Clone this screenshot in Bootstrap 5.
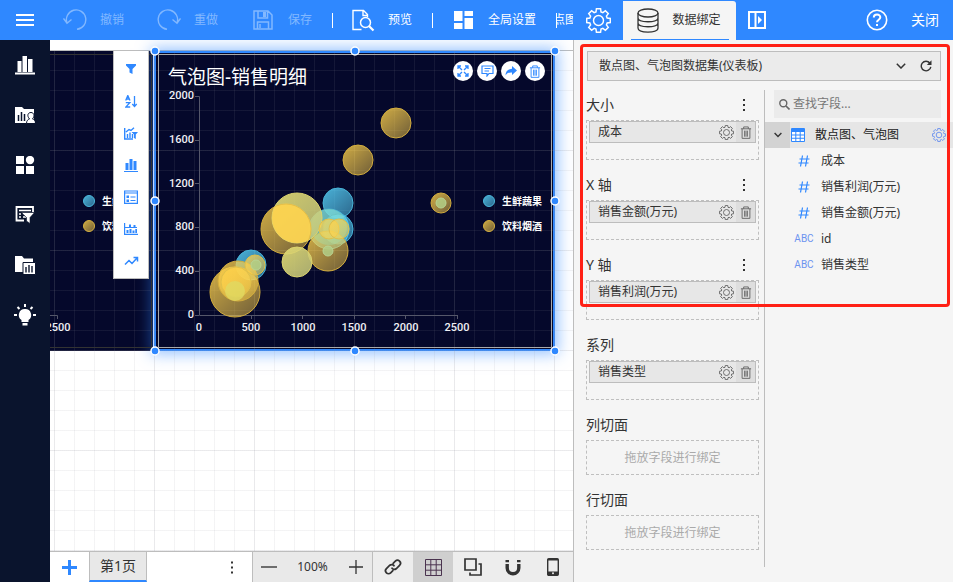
<!DOCTYPE html>
<html lang="zh-CN">
<head>
<meta charset="utf-8">
<meta name="viewport" content="width=device-width, initial-scale=1">
<title>仪表板设计器</title>
<link href="https://cdn.jsdelivr.net/npm/bootstrap@5.3.0/dist/css/bootstrap.min.css" rel="stylesheet">
<style>
:root { --brand:#2f88ff; --navy:#05082b; --line:#bdbdbd; --panel:#f5f5f5; }
body { font-family:"Noto Sans","Noto Sans CJK SC",sans-serif; font-size:12px; line-height:20px; color:#333; }
button { background:none; border:0; padding:0; color:inherit; font-size:inherit; line-height:inherit; }
svg { display:block; flex:none; }
.ln { fill:none; stroke:currentColor; }
.topbar { background:var(--brand); height:40px; color:#fff; }
.icon-slot { width:24px; display:flex; justify-content:center; }
.tool { display:flex; align-items:center; gap:13px; white-space:nowrap; flex:none; }
.tool:disabled { color:#82b8ff; }
.tools { gap:33px; }
.menu-btn { width:50px; margin-right:13px; }
.sep { width:1px; height:15px; background:#fff; margin:0 18px 0 20px; flex:none; }
.peek { width:17px; border-left:1px solid #fff; height:15px; overflow:hidden; margin-left:20px; white-space:nowrap; display:flex; justify-content:center; align-items:center; flex:none; }
.side { width:379px; flex:none; }
.tab-cog { width:49px; }
.tab-bind { background:var(--panel); color:#333; width:113px; margin-top:1px; border-radius:0 3px 0 0; }
.tab-bind .tool { width:98px; margin:0 auto; height:100%; border-bottom:1px solid var(--brand); padding-left:6px; gap:14px; }
.side .big { font-size:14px; margin:0 14px 0 23px; }
.rail { width:50px; background:#0a142d; color:#fff; flex:none; }
.rail button { height:50px; }
.board { background:#fff; overflow:hidden; min-width:0; }
.stage { margin-top:10px; border-top:1px solid var(--line); position:relative; }
.gridlines { position:absolute; inset:0; pointer-events:none;
 background-image:linear-gradient(90deg,rgba(150,150,160,.1) 1px,transparent 1px),linear-gradient(rgba(150,150,160,.1) 1px,transparent 1px),linear-gradient(90deg,rgba(150,150,160,.11) 1px,transparent 1px),linear-gradient(rgba(150,150,160,.11) 1px,transparent 1px);
 background-size:100px 100px,100px 100px,20px 20px,20px 20px; background-position:4px -1px; }
.widget { position:absolute; top:0; height:300px; background:var(--navy); color:#fff; }
.widget-a { left:0; width:103px; }
.widget-b { left:104px; width:401px; border:2px solid var(--brand); box-shadow:0 0 14px 3px rgba(47,136,255,.5); }
.plot { position:absolute; top:0; height:300px; }
.plot-a { left:0; width:104px; }
.plot-b { left:104px; width:401px; }
.plot text { font:500 11px Roboto,"Noto Sans CJK SC",sans-serif; fill:#f0f0f5; }
.plot .key { font-size:10px; font-weight:700; fill:#fff; }
.widget-head { position:absolute; top:10px; left:118px; width:377px; color:#fff; }
.widget-head h2 { font-size:19px; line-height:32px; margin:0; font-weight:400; }
.round { width:20px; height:20px; border-radius:50%; background:#fff; color:var(--brand); display:flex; align-items:center; justify-content:center; }
.quick { position:absolute; left:63px; top:0; width:36px; background:#fff; color:var(--brand); border:1px solid var(--line); border-top:0; padding:2px 0 1px; }
.quick button { height:32px; display:flex; align-items:center; justify-content:center; }
.footbar { height:31px; border-top:1px solid var(--line); }
.footbar button { width:40px; display:flex; align-items:center; justify-content:center; flex:none; }
.footbar .add { width:39px; }
.page-tab { background:#e8e8e8; border:solid var(--line); border-width:0 1px; font-size:14px; }
.footbar .page-tab { width:58px; border-bottom:2px solid var(--brand); }
.footbar .more { width:41px; }
.zoomer { background:#e9e9e9; border:solid var(--line); border-width:0 1px; width:121px; }
.footbar .zoomer button { width:32px; }
.modes { background:#ededed; }
.modes .on { background:#cfcfcf; }
.panel { background:var(--panel); border-left:1px solid var(--line); position:relative; width:380px; flex:none; padding-top:11px; }
.source { margin:0 12px 9px 13px; height:30px; background:#ebebeb; border:1px solid var(--line); }
.source select { appearance:none; background:none; border:0; color:#333; height:28px; padding:0 11px; outline:0; }
.source button { width:28px; display:flex; justify-content:center; align-items:center; }
.chev { pointer-events:none; margin-right:6px; }
.bindings { width:191px; padding:0 5px 0 12px; border-right:1px solid var(--line); margin-bottom:15px; flex:none; }
.bindings section { margin-bottom:10px; }
.bindings h3 { font-size:14px; line-height:30px; margin:0; font-weight:400; }
.bindings h3 + button { width:30px; display:flex; justify-content:center; }
.drop { border:1px dashed #bfbfbf; height:40px; padding:0 2px; }
.drop-empty { height:35px; color:#aaa; display:flex; align-items:center; justify-content:center; }
.chip { height:22px; background:#e7e7e7; border:1px solid var(--line); padding-left:8px; }
.chip span { flex:1; }
.chip button { width:19px; height:20px; display:flex; align-items:center; justify-content:center; color:#666; }
.chip .del { background:#dedede; }
.search { margin:0 12px 4px 9px; height:28px; background:#ebebeb; padding-left:5px; gap:3px; color:#666; }
.search input { border:0; background:none; outline:0; width:100%; min-width:0; padding:0; }
.search input::placeholder { color:#777; }
.tree li, .root { height:26px; display:flex; align-items:center; }
.root { background:#e6e6e6; color:#222; }
.root .twist { width:25px; height:26px; background:#d3d3d3; display:flex; align-items:center; justify-content:center; margin-right:1px; }
.root .name { flex:1; padding-left:10px; }
.root .cog { margin-right:7px; color:#6f95ef; }
.kind { width:24px; margin-left:27px; margin-right:5px; display:flex; justify-content:center; color:var(--brand); font:10px/20px Roboto,sans-serif; }
.kind.abc { color:#6c93f0; }
.focus-frame { position:absolute; left:6px; right:3px; top:4px; height:263px; border:3px solid #ff2015; border-radius:4px; pointer-events:none; }
</style>
<script src="https://cdn.jsdelivr.net/npm/bootstrap@5.3.0/dist/js/bootstrap.bundle.min.js"></script>
</head>
<body class="vh-100 d-flex flex-column overflow-hidden">
<svg width="0" height="0" class="position-absolute" aria-hidden="true">
<defs>
<symbol id="cog" viewBox="-12 -12 24 24"><path class="ln" d="M-2.4-8.3L-2-11.3H2L2.4-8.3L4.2-7.6L6.6-9.4L9.4-6.6L7.6-4.2L8.3-2.4L11.3-2V2L8.3 2.4L7.6 4.2L9.4 6.6L6.6 9.4L4.2 7.6L2.4 8.3L2 11.3H-2L-2.4 8.3L-4.2 7.6L-6.6 9.4L-9.4 6.6L-7.6 4.2L-8.3 2.4L-11.3 2V-2L-8.3-2.4L-7.6-4.2L-9.4-6.6L-6.6-9.4L-4.2-7.6Z"/><circle class="ln" r="4.8"/></symbol>
<symbol id="bin" viewBox="0 0 12 14"><path class="ln" d="M.5 3H11.500M3.500 3V1H8.500V3M1.800 3V13.300H10.200V3M4.500 5V11.500M6 5V11.500M7.500 5V11.500"/></symbol>
<symbol id="dots" viewBox="0 0 4 14"><path fill="currentColor" d="M1 1h2v2H1zM1 6h2v2H1zM1 11h2v2H1z"/></symbol>
<symbol id="hash" viewBox="0 0 12 12"><path class="ln" stroke-width="1.2" d="M4.500.5L2.500 11.500M9.500.5L7.500 11.500M1.500 4H11.500M.5 8H10.500"/></symbol>
<linearGradient id="gold" x1="0" y1="0" x2="1" y2="1"><stop offset="0" stop-color="#ffd24b" stop-opacity=".82"/><stop offset="1" stop-color="#ffd24b" stop-opacity=".42"/></linearGradient>
<linearGradient id="aqua" x1="0" y1="0" x2="1" y2="1"><stop offset="0" stop-color="#5ad8ff" stop-opacity=".82"/><stop offset="1" stop-color="#5ad8ff" stop-opacity=".45"/></linearGradient>
<linearGradient id="lime" x1="0" y1="0" x2="1" y2="1"><stop offset="0" stop-color="#e4dc72" stop-opacity=".92"/><stop offset="1" stop-color="#c5c87c" stop-opacity=".85"/></linearGradient>
<clipPath id="overlap"><circle cx="297" cy="218" r="25"/></clipPath>
</defs>
</svg>

<header class="topbar d-flex flex-shrink-0">
 <div class="d-flex align-items-center flex-grow-1 overflow-hidden">
  <button class="menu-btn d-flex justify-content-center flex-shrink-0" aria-label="菜单"><svg width="18" height="12"><path d="M0 1H18M0 6H18M0 11H18" stroke="#fff" stroke-width="2"/></svg></button>
  <div class="tools d-flex">
   <button class="tool" disabled><svg width="24" height="22"><path class="ln" stroke-width="1.400" d="M4 14A9.700 9.700 0 1 1 14 20.300M.5 9.500L4 14.200L8.500 10.500"/></svg>撤销</button>
   <button class="tool" disabled><svg width="24" height="22"><path class="ln" stroke-width="1.400" d="M20 14A9.700 9.700 0 1 0 10 20.300M23.500 9.500L20 14.200L15.500 10.500"/></svg>重做</button>
   <button class="tool" disabled><span class="icon-slot"><svg width="20" height="20"><path class="ln" stroke-width="1.500" d="M1 1H15L19 5V19H1ZM5 1V8H14.500V1M4.500 19V12H15.500V19M7 14V18"/><path fill="currentColor" d="M10 2h3v5h-3z"/></svg></span>保存</button>
  </div>
  <span class="sep"></span>
  <button class="tool"><svg width="24" height="23"><path class="ln" stroke-width="1.400" d="M10.500 20.500H2V1.500H12.500L16.500 5.500V8M12 1.500V6.500H16.500"/><circle class="ln" stroke-width="1.500" cx="14.500" cy="13.500" r="5"/><path stroke="currentColor" stroke-width="2.200" d="M18 17L22.500 21.500"/></svg>预览</button>
  <span class="sep"></span>
  <button class="tool"><span class="icon-slot"><svg width="19" height="18"><path fill="#fff" d="M0 0H8.500V10H0ZM10.500 0H19V5H10.500ZM0 12H8.500V18H0ZM10.500 7H19V18H10.500Z"/></svg></span>全局设置</button>
  <span class="peek">点图</span>
 </div>
 <nav class="side d-flex">
  <button class="tab-cog d-flex align-items-center justify-content-center" aria-label="设置"><svg width="25" height="25" stroke-width="1.400"><use href="#cog"/></svg></button>
  <button class="tab-bind"><span class="tool"><svg width="22" height="25"><g fill="none" stroke="#333" stroke-width="1.300"><ellipse cx="11" cy="5" rx="10" ry="4"/><path d="M1 5V20C1 25.500 21 25.500 21 20V5M1 10C1 15 21 15 21 10M1 15C1 20 21 20 21 15"/></g></svg>数据绑定</span></button>
  <button class="ms-2 px-1" aria-label="收起面板"><svg width="18" height="18"><path class="ln" stroke-width="2" d="M1 1H17V17H1ZM7.500 1V17"/><path fill="#fff" d="M10 5L14 9L10 13Z"/></svg></button>
  <button class="ms-auto" aria-label="帮助"><svg width="22" height="22"><circle class="ln" stroke-width="1.600" cx="11" cy="11" r="9.700"/><path class="ln" stroke-width="2" d="M7.800 8.500C7.800 4.500 14.300 4.600 14.300 8.300C14.300 10.700 11 10.700 11 13.200M11 15V17"/></svg></button>
  <button class="big">关闭</button>
 </nav>
</header>

<div class="d-flex flex-grow-1 overflow-hidden">
 <nav class="rail d-flex flex-column align-items-stretch">
  <button class="d-flex align-items-center justify-content-center" aria-label="图表"><svg width="20" height="20"><path fill="#fff" d="M0 17.500H20V19.500H0ZM2.500 6H6.500V17H2.500ZM7.500 1H12V17H7.500ZM13 4H17.500V17H13Z"/></svg></button>
  <button class="d-flex align-items-center justify-content-center" aria-label="我的组件"><svg width="20" height="18"><path fill="#fff" d="M0 1H7L9 3H19V17H0Z"/><path stroke="#0a142d" stroke-width="1.500" d="M3.500 9V15M6.500 6V15M9.500 8V15"/><path fill="#fff" stroke="#0a142d" d="M11.500 17.500C11.500 14.500 13 13.500 14.500 13C11.500 9.500 13 6.500 16 6.500S20 10 17.500 13C19 13.500 20.500 14.500 20.500 17.500Z"/></svg></button>
  <button class="d-flex align-items-center justify-content-center" aria-label="组件"><svg width="20" height="18"><path fill="#fff" d="M1 0H9V8H1ZM1 10H9V18H1ZM11 10H19V18H11Z"/><circle cx="15" cy="4" r="4.200" fill="#fff"/></svg></button>
  <button class="d-flex align-items-center justify-content-center" aria-label="筛选组件"><svg width="20" height="18"><path fill="none" stroke="#fff" stroke-width="1.800" d="M9 14.500H1.500V1H18V6"/><path stroke="#fff" stroke-width="1.300" d="M4 4.500H16M4 8H6M4 11H6M8 8H12M8 11H11"/><path fill="#fff" stroke="#0a142d" stroke-width=".6" d="M6.500 6.500H19.500L15 11.500V17.500L11.500 15V11.500Z"/></svg></button>
  <button class="d-flex align-items-center justify-content-center" aria-label="图表文件夹"><svg width="21" height="19"><path fill="#fff" d="M0 0H7L9 2.500H18V16H0Z"/><path fill="#fff" stroke="#0a142d" d="M8 6.500H20.500V18.500H8Z"/><path stroke="#0a142d" stroke-width="1.400" d="M11 11V16.500M14 9V16.500M17 10V16.500"/></svg></button>
  <button class="d-flex align-items-center justify-content-center" aria-label="提示"><svg width="22" height="23"><path fill="#fff" d="M11 5A6 6 0 0 1 14.500 16V18H7.500V16A6 6 0 0 1 11 5ZM8.500 19H13.500V21.500H8.500Z"/><path stroke="#fff" stroke-width="2" d="M11 0V3M3.500 3L5.500 5M18.500 3L16.500 5M0 11H3M19 11H22"/></svg></button>
 </nav>

 <main class="board d-flex flex-column flex-grow-1">
  <div class="stage flex-grow-1">
   <div class="widget widget-a"></div>
   <div class="widget widget-b"></div>
   <div class="gridlines"></div>
   <svg class="plot plot-a" viewBox="50 51 104 300">
    <path class="ln" stroke="#aaa" d="M50 54.500H151.500V347.500H50"/>
    <path stroke="#55576a" fill="none" d="M50 315.500H57.500V319"/>
    <text x="58" y="331" text-anchor="middle">2500</text>
    <circle cx="89" cy="201" r="5.500" fill="url(#aqua)" stroke="#4bb8dc"/><circle cx="89" cy="226" r="5.500" fill="url(#gold)" stroke="#d6b040"/>
    <text class="key" x="102" y="205">生鲜蔬果</text><text class="key" x="102" y="230">饮料烟酒</text>
   </svg>
   <svg class="plot plot-b" viewBox="154 51 401 300" role="img" aria-label="气泡图">
    <path fill="none" stroke="#aaa" d="M158.500 54.500H551.500V347.500H158.500Z"/>
    <path stroke="#55576a" fill="none" d="M195 96.500H199.500V315.500H457.500M195 140.500H199M195 183.500H199M195 227.500H199M195 271.500H199M195 315.500H199M251.500 315V319M302.500 315V319M354.500 315V319M405.500 315V319M457.500 315V319"/>
    <g text-anchor="end"><text x="194" y="99">2000</text><text x="194" y="143">1600</text><text x="194" y="187">1200</text><text x="194" y="230">800</text><text x="194" y="274">400</text><text x="194" y="318">0</text></g>
    <g text-anchor="middle"><text x="199" y="331">0</text><text x="251" y="331">500</text><text x="303" y="331">1000</text><text x="354" y="331">1500</text><text x="406" y="331">2000</text><text x="457" y="331">2500</text></g>
    <g fill="url(#aqua)" stroke="#48b4d8"><circle cx="338" cy="203" r="15"/><circle cx="329" cy="229" r="20"/><circle cx="338" cy="229" r="15"/><circle cx="251" cy="265" r="15"/></g>
    <g fill="url(#gold)" stroke="#d3ad3d"><circle cx="396" cy="123" r="15"/><circle cx="358" cy="160" r="15"/><circle cx="286" cy="229" r="25"/><circle cx="328" cy="251" r="20"/><circle cx="235" cy="292" r="25"/><circle cx="238" cy="281" r="20"/><circle cx="441" cy="203" r="10"/></g>
    <circle cx="329" cy="227" r="18" fill="#a0dfac" opacity=".4"/>
    <g fill="url(#lime)" stroke="#dcd46e"><circle cx="297" cy="262" r="15"/><circle cx="297" cy="218" r="25"/></g>
    <circle cx="286" cy="229" r="25" fill="#ffd24b" fill-opacity=".85" stroke="#e6bd45" clip-path="url(#overlap)"/>
    <g fill="url(#gold)" stroke="#e0c04a"><circle cx="329" cy="229" r="10"/><circle cx="339" cy="229" r="10"/><circle cx="255" cy="265" r="10"/><circle cx="236" cy="282" r="15"/></g>
    <g fill="#b2ce86" stroke="#b9d493" fill-opacity=".85"><circle cx="328" cy="251" r="5"/><circle cx="256" cy="265" r="5"/><circle cx="441" cy="203" r="5"/></g>
    <circle cx="235" cy="291" r="10" fill="#e0da62" fill-opacity=".8"/>
    <circle cx="489" cy="201" r="5.500" fill="url(#aqua)" stroke="#4bb8dc"/><circle cx="489" cy="226" r="5.500" fill="url(#gold)" stroke="#d6b040"/>
    <text class="key" x="502" y="205">生鲜蔬果</text><text class="key" x="502" y="230">饮料烟酒</text>
   </svg>
   <div class="widget-head d-flex justify-content-between align-items-start">
    <h2>气泡图-销售明细</h2>
    <div class="d-flex gap-1">
     <button class="round" aria-label="全屏"><svg width="12" height="12"><path class="ln" stroke-width="1.300" d="M1 4V1H4M8 1H11V4M11 8V11H8M4 11H1V8M1 1L5 5M11 1L7 5M11 11L7 7M1 11L5 7"/></svg></button>
     <button class="round" aria-label="备注"><svg width="13" height="12"><path class="ln" stroke-width="1.200" d="M1 1H12V8.500H8L6 11V8.500H1ZM3.500 3.500H9.500M3.500 6H8"/></svg></button>
     <button class="round" aria-label="分享"><svg width="12" height="10"><path fill="currentColor" d="M7 0L12 4.500L7 9V6.500C4 6.300 2 7 .5 9.500C.5 5.500 3 3 7 2.700Z"/></svg></button>
     <button class="round" aria-label="删除"><svg width="12" height="13"><use href="#bin"/></svg></button>
    </div>
   </div>
   <svg class="position-absolute top-0 start-0 overflow-visible pe-none" width="1" height="1"><g fill="#2f88ff" stroke="#fff" stroke-width="1.500"><circle cx="105" cy="0" r="4"/><circle cx="305" cy="0" r="4"/><circle cx="505" cy="0" r="4"/><circle cx="105" cy="150" r="4"/><circle cx="505" cy="150" r="4"/><circle cx="105" cy="300" r="4"/><circle cx="305" cy="300" r="4"/><circle cx="505" cy="300" r="4"/></g></svg>
   <div class="quick d-flex flex-column">
    <button aria-label="筛选"><svg width="10" height="10"><path fill="currentColor" d="M0 0H10V1.500L6.500 5V10L3.500 8.500V5L0 1.500Z"/></svg></button>
    <button aria-label="排序"><svg width="13" height="13"><path class="ln" stroke-width="1.300" d="M.7 5.500L2.800.5L5 5.500M1.400 4H4.200M.8 7.700H4.800L.8 12H5.200M9.500 1V11.500M7.300 9L9.500 11.500L11.700 9"/></svg></button>
    <button aria-label="图表筛选"><svg width="14" height="13"><path class="ln" stroke-width="1.400" d="M.7 1V12H9M3.500 11V7M6 11V5.500M8.500 11V7M2 5L5 2.500L7 3.500L10 .8"/><path fill="currentColor" d="M7.500 5H14L11.800 7.500V12L10 11V7.500Z"/></svg></button>
    <button aria-label="图表类型"><svg width="14" height="13"><path fill="currentColor" d="M0 12H14V13H0ZM1.500 4H4.500V11H1.500ZM5.500 0H8.500V11H5.500ZM9.500 2H12.500V11H9.500Z"/></svg></button>
    <button aria-label="属性"><svg width="14" height="14"><path class="ln" stroke-width="1.200" d="M.6 1H13.400V13.400H.6ZM.6 3H13.400M6.500 7H11.500M6.500 10.500H11.500"/><path fill="currentColor" d="M2.500 5.500H5V8H2.500ZM2.500 9.500H5V12H2.500Z"/></svg></button>
    <button aria-label="分析"><svg width="14" height="12"><path class="ln" stroke-width="1.200" d="M.6 0V11.300H14M1 4.500H13"/><path fill="currentColor" d="M2.500 7H4.500V10H2.500ZM5.500 6H7.500V10H5.500ZM8.500 7.500H10.500V10H8.500ZM11.300 6H13V10H11.300ZM5 1.500H7V4H5ZM9.500 2H11.500V4H9.500Z"/></svg></button>
    <button aria-label="趋势"><svg width="15" height="10"><path class="ln" stroke-width="1.500" d="M1 8.500L5 4.500L8 7.500L13 2M9.500 1.500H13.500V5.500"/></svg></button>
   </div>
  </div>
  <footer class="footbar d-flex">
   <button class="add" aria-label="添加页"><svg width="15" height="15"><path d="M7.500 0V15M0 7.500H15" stroke="#2f88ff" stroke-width="3"/></svg></button>
   <button class="page-tab">第1页</button>
   <button class="more ms-auto" aria-label="更多"><svg width="4" height="15"><use href="#dots"/></svg></button>
   <div class="zoomer d-flex align-items-center justify-content-between">
    <button aria-label="缩小"><svg width="16" height="16"><path stroke="#444" stroke-width="1.500" d="M0 8H16"/></svg></button><span>100%</span><button aria-label="放大"><svg width="14" height="14"><path stroke="#333" stroke-width="1.300" d="M0 7H14M7 0V14"/></svg></button>
   </div>
   <div class="modes d-flex">
    <button aria-label="链接"><svg width="20" height="20" viewBox="0 0 20 20"><g transform="rotate(-45 10 10)" fill="none" stroke="#333" stroke-width="1.700"><path d="M8 12.500H4.200A3 3 0 0 1 4.200 6.500H9A3 3 0 0 1 11.500 10.500"/><path d="M12 7.500H15.800A3 3 0 0 1 15.800 13.500H11A3 3 0 0 1 8.500 9.500"/></g></svg></button>
    <button class="on" aria-label="网格"><svg width="17" height="17"><path fill="none" stroke="#4a334f" d="M.5.5H16.500V16.500H.5ZM5.800.5V16.500M11.200.5V16.500M.5 5.800H16.500M.5 11.200H16.500"/></svg></button>
    <button aria-label="图层"><svg width="18" height="18"><path fill="none" stroke="#333" stroke-width="1.700" d="M1 1H12V12H1ZM14.500 6H17V17H6V14.500"/></svg></button>
    <button aria-label="吸附"><svg width="16" height="17"><path fill="none" stroke="#333" stroke-width="3.400" d="M2.200 5V9A5.800 5.800 0 0 0 13.800 9V5"/><path fill="#333" d="M.5 1H4V3.300H.5ZM12 1H15.500V3.300H12Z"/></svg></button>
    <button aria-label="手机"><svg width="12" height="18"><rect x=".7" y=".7" width="10.600" height="16.600" rx="1" fill="none" stroke="#333" stroke-width="1.400"/><path fill="#333" d="M1 13.500H11V17H1ZM1 1H11V2.500H1Z"/><circle cx="6" cy="15.300" r="1" fill="#eee"/></svg></button>
   </div>
  </footer>
 </main>

 <aside class="panel d-flex flex-column">
  <div class="source d-flex align-items-center">
   <select class="flex-grow-1" aria-label="数据集"><option>散点图、气泡图数据集(仪表板)</option></select>
   <svg class="chev" width="10" height="6"><path fill="none" stroke="#333" stroke-width="1.500" d="M.8.8L5 5L9.200.8"/></svg>
   <button aria-label="刷新"><svg width="12" height="12"><path fill="none" stroke="#333" stroke-width="1.400" d="M9.800 3A4.800 4.800 0 1 0 10.800 6.800"/><path fill="#333" d="M11.500.3V5H6.800Z"/></svg></button>
  </div>
  <div class="d-flex flex-grow-1">
   <div class="bindings">
    <section><div class="d-flex justify-content-between"><h3>大小</h3><button aria-label="更多"><svg class="mt-2" width="4" height="14"><use href="#dots"/></svg></button></div>
     <div class="drop"><div class="chip d-flex align-items-center"><span>成本</span><button aria-label="设置"><svg width="15" height="15" stroke-width="1.500"><use href="#cog"/></svg></button><button class="del" aria-label="删除"><svg width="12" height="13"><use href="#bin"/></svg></button></div></div></section>
    <section><div class="d-flex justify-content-between"><h3>X 轴</h3><button aria-label="更多"><svg class="mt-2" width="4" height="14"><use href="#dots"/></svg></button></div>
     <div class="drop"><div class="chip d-flex align-items-center"><span>销售金额(万元)</span><button aria-label="设置"><svg width="15" height="15" stroke-width="1.500"><use href="#cog"/></svg></button><button class="del" aria-label="删除"><svg width="12" height="13"><use href="#bin"/></svg></button></div></div></section>
    <section><div class="d-flex justify-content-between"><h3>Y 轴</h3><button aria-label="更多"><svg class="mt-2" width="4" height="14"><use href="#dots"/></svg></button></div>
     <div class="drop"><div class="chip d-flex align-items-center"><span>销售利润(万元)</span><button aria-label="设置"><svg width="15" height="15" stroke-width="1.500"><use href="#cog"/></svg></button><button class="del" aria-label="删除"><svg width="12" height="13"><use href="#bin"/></svg></button></div></div></section>
    <section><h3>系列</h3>
     <div class="drop"><div class="chip d-flex align-items-center"><span>销售类型</span><button aria-label="设置"><svg width="15" height="15" stroke-width="1.500"><use href="#cog"/></svg></button><button class="del" aria-label="删除"><svg width="12" height="13"><use href="#bin"/></svg></button></div></div></section>
    <section><h3>列切面</h3><div class="drop drop-empty">拖放字段进行绑定</div></section>
    <section><h3>行切面</h3><div class="drop drop-empty">拖放字段进行绑定</div></section>
   </div>
   <div class="flex-grow-1">
    <label class="search d-flex align-items-center"><svg width="11" height="11"><circle class="ln" stroke-width="1.400" cx="4.300" cy="4.300" r="3.500"/><path class="ln" stroke-width="1.600" d="M7 7L10.500 10.500"/></svg><input type="text" placeholder="查找字段..." aria-label="查找字段"></label>
    <div class="root"><button class="twist" aria-label="折叠"><svg width="8" height="6"><path fill="none" stroke="#333" stroke-width="1.400" d="M.6 1L4 4.500L7.400 1"/></svg></button><svg width="14" height="14"><rect width="14" height="14" rx="1" fill="#2f88ff"/><path fill="#fff" d="M1 4H4.300V6.500H1ZM5.300 4H8.700V6.500H5.300ZM9.700 4H13V6.500H9.700ZM1 7.500H4.300V9.700H1ZM5.300 7.500H8.700V9.700H5.300ZM9.700 7.500H13V9.700H9.700ZM1 10.700H4.300V13H1ZM5.300 10.700H8.700V13H5.300ZM9.700 10.700H13V13H9.700Z"/></svg><span class="name">散点图、气泡图</span><button class="cog" aria-label="设置"><svg width="14" height="14" stroke-width="1.700"><use href="#cog"/></svg></button></div>
    <ul class="tree list-unstyled mb-0">
     <li><span class="kind"><svg width="12" height="12"><use href="#hash"/></svg></span>成本</li>
     <li><span class="kind"><svg width="12" height="12"><use href="#hash"/></svg></span>销售利润(万元)</li>
     <li><span class="kind"><svg width="12" height="12"><use href="#hash"/></svg></span>销售金额(万元)</li>
     <li><span class="kind abc">ABC</span>id</li>
     <li><span class="kind abc">ABC</span>销售类型</li>
    </ul>
   </div>
  </div>
  <div class="focus-frame"></div>
 </aside>
</div>
</body>
</html>
